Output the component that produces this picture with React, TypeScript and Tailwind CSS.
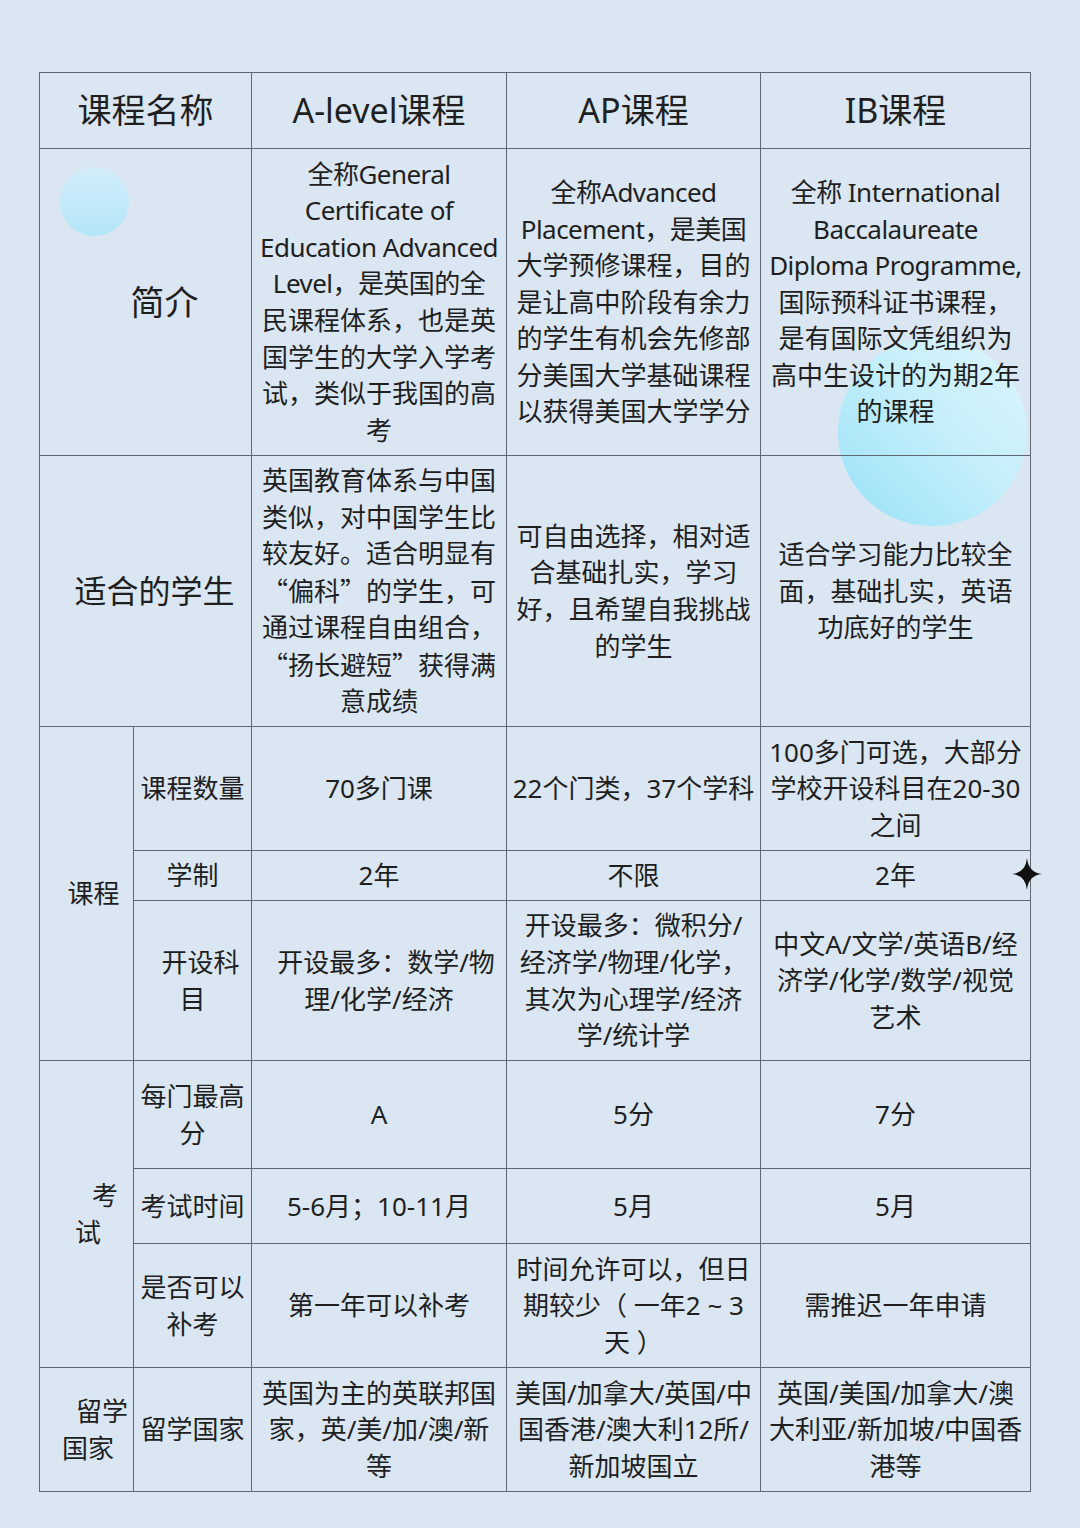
import React from 'react';

const Lines = ({ lines, tight = [] }: { lines: React.ReactNode[]; tight?: number[] }) => (
  <>
    {lines.map((l, i) => (
      <div key={i} className={tight.includes(i) ? 'tracking-[-0.55px]' : ''}>
        {l}
      </div>
    ))}
  </>
);

// full-width quotes come from the CJK face
const Q = ({ children }: { children: React.ReactNode }) => (
  <span className="font-['Noto_Sans_CJK_SC',sans-serif]">{children}</span>
);

const base = 'border border-[#5f6872] text-center whitespace-nowrap';
const td = `${base} px-2`;

export default function App() {
  return (
    <div className="relative w-[1080px] h-[1528px] overflow-hidden bg-[#dae6f2] pt-[72px] pl-[39px] font-['Noto_Sans','Noto_Sans_CJK_SC',sans-serif] text-[#1f1f1f]">
      {/* decorations */}
      <div className="absolute left-[60px] top-[167px] w-[69px] h-[69px] rounded-full bg-linear-to-b from-[#d4eefa] to-[#b2e6f8]"></div>
      <div className="absolute left-[838px] top-[338px] w-[189px] h-[188px] rounded-full bg-linear-to-bl from-[#def5fb] via-[#c2eefa] to-[#96e1f8]"></div>
      <svg className="absolute left-[1012px] top-[858px] z-20" width="30" height="32" viewBox="0 0 30 32">
        <path d="M15 0 Q16.3 14.6 30 16 Q16.3 17.4 15 32 Q13.7 17.4 0 16 Q13.7 14.6 15 0Z" fill="#111" />
      </svg>
      <span className="absolute left-[213px] top-[1099px] z-20 text-[12px] leading-none text-white/90">2</span>

      <table className="relative z-10 border-collapse table-fixed w-[991px] text-[26px] leading-[36.6px]">
        <colgroup>
          <col className="w-[94px]" />
          <col className="w-[118px]" />
          <col className="w-[255px]" />
          <col className="w-[254px]" />
          <col className="w-[270px]" />
        </colgroup>
        <tbody>
          <tr className="h-[76px] text-[34px]">
            <td colSpan={2} className={td}>课程名称</td>
            <td className={td}>A-level课程</td>
            <td className={td}>AP课程</td>
            <td className={td}>IB课程</td>
          </tr>
          <tr className="h-[307px]">
            <td colSpan={2} className={`${base} text-[34px] pl-[38px]`}>简介</td>
            <td className={td}>
              <Lines
                tight={[0, 1, 2, 3]}
                lines={['全称General', 'Certificate of', 'Education Advanced', 'Level，是英国的全', '民课程体系，也是英', '国学生的大学入学考', '试，类似于我国的高', '考']}
              />
            </td>
            <td className={td}>
              <Lines
                tight={[0, 1]}
                lines={['全称Advanced', 'Placement，是美国', '大学预修课程，目的', '是让高中阶段有余力', '的学生有机会先修部', '分美国大学基础课程', '以获得美国大学学分']}
              />
            </td>
            <td className={td}>
              <Lines
                tight={[0, 1, 2]}
                lines={['全称 International', 'Baccalaureate', 'Diploma Programme,', '国际预科证书课程，', '是有国际文凭组织为', '高中生设计的为期2年', '的课程']}
              />
            </td>
          </tr>
          <tr className="h-[271px]">
            <td colSpan={2} className={`${base} text-[32px] pl-[18px]`}>适合的学生</td>
            <td className={td}>
              <Lines
                lines={[
                  '英国教育体系与中国',
                  '类似，对中国学生比',
                  '较友好。适合明显有',
                  <>
                    <Q>“</Q>偏科<Q>”</Q>的学生，可
                  </>,
                  '通过课程自由组合，',
                  <>
                    <Q>“</Q>扬长避短<Q>”</Q>获得满
                  </>,
                  '意成绩',
                ]}
              />
            </td>
            <td className={td}>
              <Lines lines={['可自由选择，相对适', '合基础扎实，学习', '好，且希望自我挑战', '的学生']} />
            </td>
            <td className={td}>
              <Lines lines={['适合学习能力比较全', '面，基础扎实，英语', '功底好的学生']} />
            </td>
          </tr>
          <tr className="h-[124px]">
            <td rowSpan={3} className={`${base} pl-[14px]`}>课程</td>
            <td className={base}>课程数量</td>
            <td className={td}>70多门课</td>
            <td className={base}>22个门类，37个学科</td>
            <td className={td}>
              <Lines lines={['100多门可选，大部分', '学校开设科目在20-30', '之间']} />
            </td>
          </tr>
          <tr className="h-[50px]">
            <td className={base}>学制</td>
            <td className={td}>2年</td>
            <td className={td}>不限</td>
            <td className={td}>2年</td>
          </tr>
          <tr className="h-[160px]">
            <td className={base}>
              <div className="pl-[16px]">开设科</div>
              <div>目</div>
            </td>
            <td className={td}>
              <div className="pl-[14px]">开设最多：数学/物</div>
              <div>理/化学/经济</div>
            </td>
            <td className={td}>
              <Lines lines={['开设最多：微积分/', '经济学/物理/化学，', '其次为心理学/经济', '学/统计学']} />
            </td>
            <td className={td}>
              <Lines lines={['中文A/文学/英语B/经', '济学/化学/数学/视觉', '艺术']} />
            </td>
          </tr>
          <tr className="h-[108px]">
            <td rowSpan={3} className={`${base} text-left`}>
              <div className="pl-[52px]">考</div>
              <div className="pl-[35px]">试</div>
            </td>
            <td className={base}>
              <div>每门最高</div>
              <div>分</div>
            </td>
            <td className={td}>A</td>
            <td className={td}>5分</td>
            <td className={td}>7分</td>
          </tr>
          <tr className="h-[75px]">
            <td className={base}>考试时间</td>
            <td className={td}>5-6月；10-11月</td>
            <td className={td}>5月</td>
            <td className={td}>5月</td>
          </tr>
          <tr className="h-[124px]">
            <td className={base}>
              <div>是否可以</div>
              <div>补考</div>
            </td>
            <td className={td}>第一年可以补考</td>
            <td className={td}>
              <Lines lines={['时间允许可以，但日', '期较少（ 一年2 ~ 3', '天 ）']} />
            </td>
            <td className={td}>需推迟一年申请</td>
          </tr>
          <tr className="h-[124px]">
            <td className={`${base} text-left`}>
              <div className="pl-[36px]">留学</div>
              <div className="pl-[22px]">国家</div>
            </td>
            <td className={base}>留学国家</td>
            <td className={td}>
              <Lines lines={['英国为主的英联邦国', '家，英/美/加/澳/新', '等']} />
            </td>
            <td className={td}>
              <Lines lines={['美国/加拿大/英国/中', '国香港/澳大利12所/', '新加坡国立']} />
            </td>
            <td className={td}>
              <Lines lines={['英国/美国/加拿大/澳', '大利亚/新加坡/中国香', '港等']} />
            </td>
          </tr>
        </tbody>
      </table>
    </div>
  );
}
